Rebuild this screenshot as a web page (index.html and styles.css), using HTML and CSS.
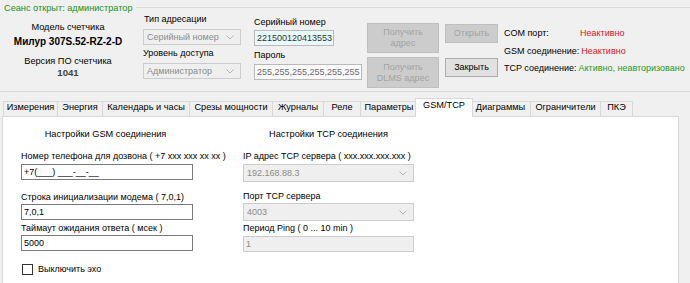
FILE: index.html
```html
<!DOCTYPE html>
<html lang="ru">
<head>
<meta charset="utf-8">
<title>GSM/TCP</title>
<link rel="stylesheet" href="styles.css">
</head>
<body>
<div class="app">
  <div class="group">
    <div class="legend-row"><span class="legend">Сеанс открыт: администратор</span><span class="rule"></span></div>
    <div class="hdr">
      <div class="col1">
        <div class="m1">Модель счетчика</div>
        <div class="m2">Милур 307S.52-RZ-2-D</div>
        <div class="m3">Версия ПО счетчика</div>
        <div class="m4">1041</div>
      </div>
      <div class="col2">
        <div class="lbl l-type">Тип адресации</div>
        <div class="combo dis hc c-type"><span>Серийный номер</span><svg class="arr" width="8" height="5" viewBox="0 0 8 5"><path d="M0.5 0.5 L4 4 L7.5 0.5" fill="none" stroke="#b4b4b4" stroke-width="1"/></svg></div>
        <div class="lbl l-lvl">Уровень доступа</div>
        <div class="combo dis hc c-lvl"><span>Администратор</span><svg class="arr" width="8" height="5" viewBox="0 0 8 5"><path d="M0.5 0.5 L4 4 L7.5 0.5" fill="none" stroke="#b4b4b4" stroke-width="1"/></svg></div>
      </div>
      <div class="col3">
        <div class="lbl l-ser">Серийный номер</div>
        <div class="tb serial">221500120413553</div>
        <div class="lbl l-pwd">Пароль</div>
        <div class="tb pwd">255,255,255,255,255,255</div>
      </div>
      <div class="col4">
        <div class="btn disb b1">Получить<br>адрес</div>
        <div class="btn disb b2">Получить<br>DLMS адрес</div>
      </div>
      <div class="col5">
        <div class="btn disb b3">Открыть</div>
        <div class="btn act b4">Закрыть</div>
      </div>
      <div class="col6">
        <div class="st s1"><span class="sl w1">COM порт:</span><span class="red">Неактивно</span></div>
        <div class="st s2"><span class="sl">GSM соединение:</span><span class="red">Неактивно</span></div>
        <div class="st s3"><span class="sl">TCP соединение:</span><span class="green">Активно, неавторизовано</span></div>
      </div>
    </div>
  </div>

  <div class="tabs">
    <div class="tab t1">Измерения</div>
    <div class="tab t2">Энергия</div>
    <div class="tab t3">Календарь и часы</div>
    <div class="tab t4">Срезы мощности</div>
    <div class="tab t5">Журналы</div>
    <div class="tab t6">Реле</div>
    <div class="tab t7">Параметры</div>
    <div class="tab sel t8">GSM/TCP</div>
    <div class="tab t9">Диаграммы</div>
    <div class="tab t10">Ограничители</div>
    <div class="tab t11">ПКЭ</div>
  </div>

  <div class="panel">
    <div class="pcol left">
      <div class="head">Настройки GSM соединения</div>
      <div class="lbl p-l1">Номер телефона для дозвона ( +7 xxx xxx xx xx )</div>
      <div class="tb ed p-i1">+7(___) ___-__-__</div>
      <div class="lbl p-l2">Строка инициализации модема ( 7,0,1)</div>
      <div class="tb ed p-i2">7,0,1</div>
      <div class="lbl p-l3">Таймаут ожидания ответа ( мсек )</div>
      <div class="tb ed p-i3">5000</div>
      <div class="chk-row"><span class="chk"></span><span>Выключить эхо</span></div>
    </div>
    <div class="pcol right">
      <div class="head">Настройки TCP соединения</div>
      <div class="lbl p-l1">IP адрес TCP сервера ( xxx.xxx.xxx.xxx )</div>
      <div class="combo dis pc r-c1"><span>192.168.88.3</span><svg class="arr" width="8" height="5" viewBox="0 0 8 5"><path d="M0.5 0.5 L4 4 L7.5 0.5" fill="none" stroke="#b4b4b4" stroke-width="1"/></svg></div>
      <div class="lbl r-l2">Порт TCP сервера</div>
      <div class="combo dis pc r-c2"><span>4003</span><svg class="arr" width="8" height="5" viewBox="0 0 8 5"><path d="M0.5 0.5 L4 4 L7.5 0.5" fill="none" stroke="#b4b4b4" stroke-width="1"/></svg></div>
      <div class="lbl r-l3">Период Ping ( 0 ... 10 min )</div>
      <div class="tb disf r-i3">1</div>
    </div>
  </div>
</div>
</body>
</html>
```

FILE: styles.css
```css
* { box-sizing: border-box; }
html, body { margin: 0; padding: 0; }
body {
  background: #f0f0f0;
  font-family: "Liberation Sans", Arial, sans-serif;
  font-size: 9px;
  color: #000;
  width: 690px;
  height: 283px;
  overflow: hidden;
}
.app { width: 690px; }

/* header group */
.group {
  height: 92px;
  border-bottom: 1px solid #dcdcdc;
}
.legend-row {
  display: flex;
  align-items: center;
  height: 15px;
  padding-left: 4px;
}
.legend { color: #1a921a; line-height: 12px; white-space: nowrap; font-size: 9.2px; }
.rule { flex: 1; border-top: 1px solid #dcdcdc; margin-left: 3px; }
.hdr { display: flex; height: 76px; }
.lbl { line-height: 12px; white-space: nowrap; }

.col1 { width: 136px; text-align: center; line-height: 12px; font-size: 9.2px; }
.col1 .m1 { margin-top: 6px; }
.col1 .m2 { margin-top: 3px; font-weight: bold; font-size: 10px; }
.col1 .m3 { margin-top: 7px; }
.col1 .m4 { font-weight: bold; color: #444; font-size: 9.6px; }

.col2 { width: 98px; margin-left: 7px; }
.l-type { margin-top: -2px; padding-left: 1px; }
.c-type { margin-top: 4px; }
.l-lvl { margin-top: 2px; }
.c-lvl { margin-top: 4px; }

.combo {
  position: relative;
  display: flex;
  align-items: center;
  justify-content: space-between;
  border: 1px solid #cccccc;
  padding: 0 6px 0 3px;
  white-space: nowrap;
}
.combo.dis { background: #efefef; color: #8c8c8c; }
.combo.hc { height: 16px; }
.combo.pc { height: 18px; }
.arr { display: block; flex: none; }

.col3 { width: 109px; margin-left: 13px; }
.l-ser { margin-top: 1px; }
.l-pwd { margin-top: 3px; }
.tb {
  height: 16px;
  line-height: 14px;
  border: 1px solid #b9b9b9;
  padding: 0 2px;
  white-space: nowrap;
  overflow: hidden;
}
.serial { margin-top: 2px; width: 80px; background: #e8fbfb; color: #333; }
.pwd { margin-top: 3px; width: 108px; background: #fafafa; color: #6d6d6d; }

.btn {
  display: flex;
  align-items: center;
  justify-content: center;
  text-align: center;
  line-height: 11px;
  border: 1px solid #bfbfbf;
}
.disb { background: #cccccc; color: #a3a3a3; }
.act { background: #e1e1e1; border-color: #adadad; color: #000; }
.col4 { width: 72px; margin-left: 4px; }
.b1 { margin-top: 8px; height: 30px; }
.b2 { margin-top: 4px; height: 31px; }
.col5 { width: 53px; margin-left: 6px; }
.b3 { margin-top: 9px; height: 19px; }
.b4 { margin-top: 15px; height: 19px; }

.col6 { margin-left: 6px; }
.st { display: flex; line-height: 12px; white-space: nowrap; }
.s1 { margin-top: 12px; }
.s2 { margin-top: 6px; }
.s3 { margin-top: 5px; }
.sl { margin-right: 2px; }
.w1 { width: 76px; margin-right: 0; }
.red { color: #e2141e; }
.green { color: #1f9a1f; }

/* tabs */
.tabs {
  display: flex;
  align-items: flex-end;
  height: 24px;
  padding-left: 4px;
}
.tab {
  height: 15px;
  margin-left: -1px;
  border: 1px solid #d9d9d9;
  border-bottom: none;
  background: #f0f0f0;
  text-align: center;
  line-height: 11px;
  white-space: nowrap;
  font-size: 9.2px;
}
.tab.sel {
  position: relative;
  z-index: 1;
  height: 19px;
  margin-left: -3px;
  margin-right: -2px;
  margin-bottom: -1px;
  background: #fff;
  line-height: 12px;
}
.t1 { width: 55px; }
.t2 { width: 46px; }
.t3 { width: 88px; }
.t4 { width: 84px; }
.t5 { width: 52px; }
.t6 { width: 38px; }
.t7 { width: 58px; }
.t8 { width: 58px; }
.t9 { width: 61px; }
.t10 { width: 71px; }
.t11 { width: 33px; }

/* panel */
.panel {
  display: flex;
  margin-left: 2px;
  width: 677px;
  height: 180px;
  background: #fff;
  border: 1px solid #d9d9d9;
  padding-left: 18px;
}
.pcol.left { width: 172px; }
.pcol.right { width: 171px; margin-left: 50px; }
.head { margin-top: 11px; line-height: 12px; text-align: center; white-space: nowrap; font-size: 9.2px; }
.left .head { padding-right: 3px; }
.p-l1 { margin-top: 10px; }
.tb.ed { background: #fff; border-color: #7a7a7a; }
.p-i1 { margin-top: 2px; }
.p-l2 { margin-top: 11px; }
.p-i2 { margin-top: 1px; }
.p-l3 { margin-top: 2px; }
.p-i3 { margin-top: 1px; }
.chk-row { display: flex; align-items: center; margin-top: 12px; margin-left: 1px; line-height: 12px; }
.chk { width: 11px; height: 11px; border: 1px solid #333; background: #fff; margin-right: 5px; }

.r-c1 { margin-top: 2px; }
.r-l2 { margin-top: 8px; }
.r-c2 { margin-top: 1px; }
.r-l3 { margin-top: 1px; }
.tb.disf { margin-top: 2px; background: #efefef; border-color: #cccccc; color: #8c8c8c; }
```
